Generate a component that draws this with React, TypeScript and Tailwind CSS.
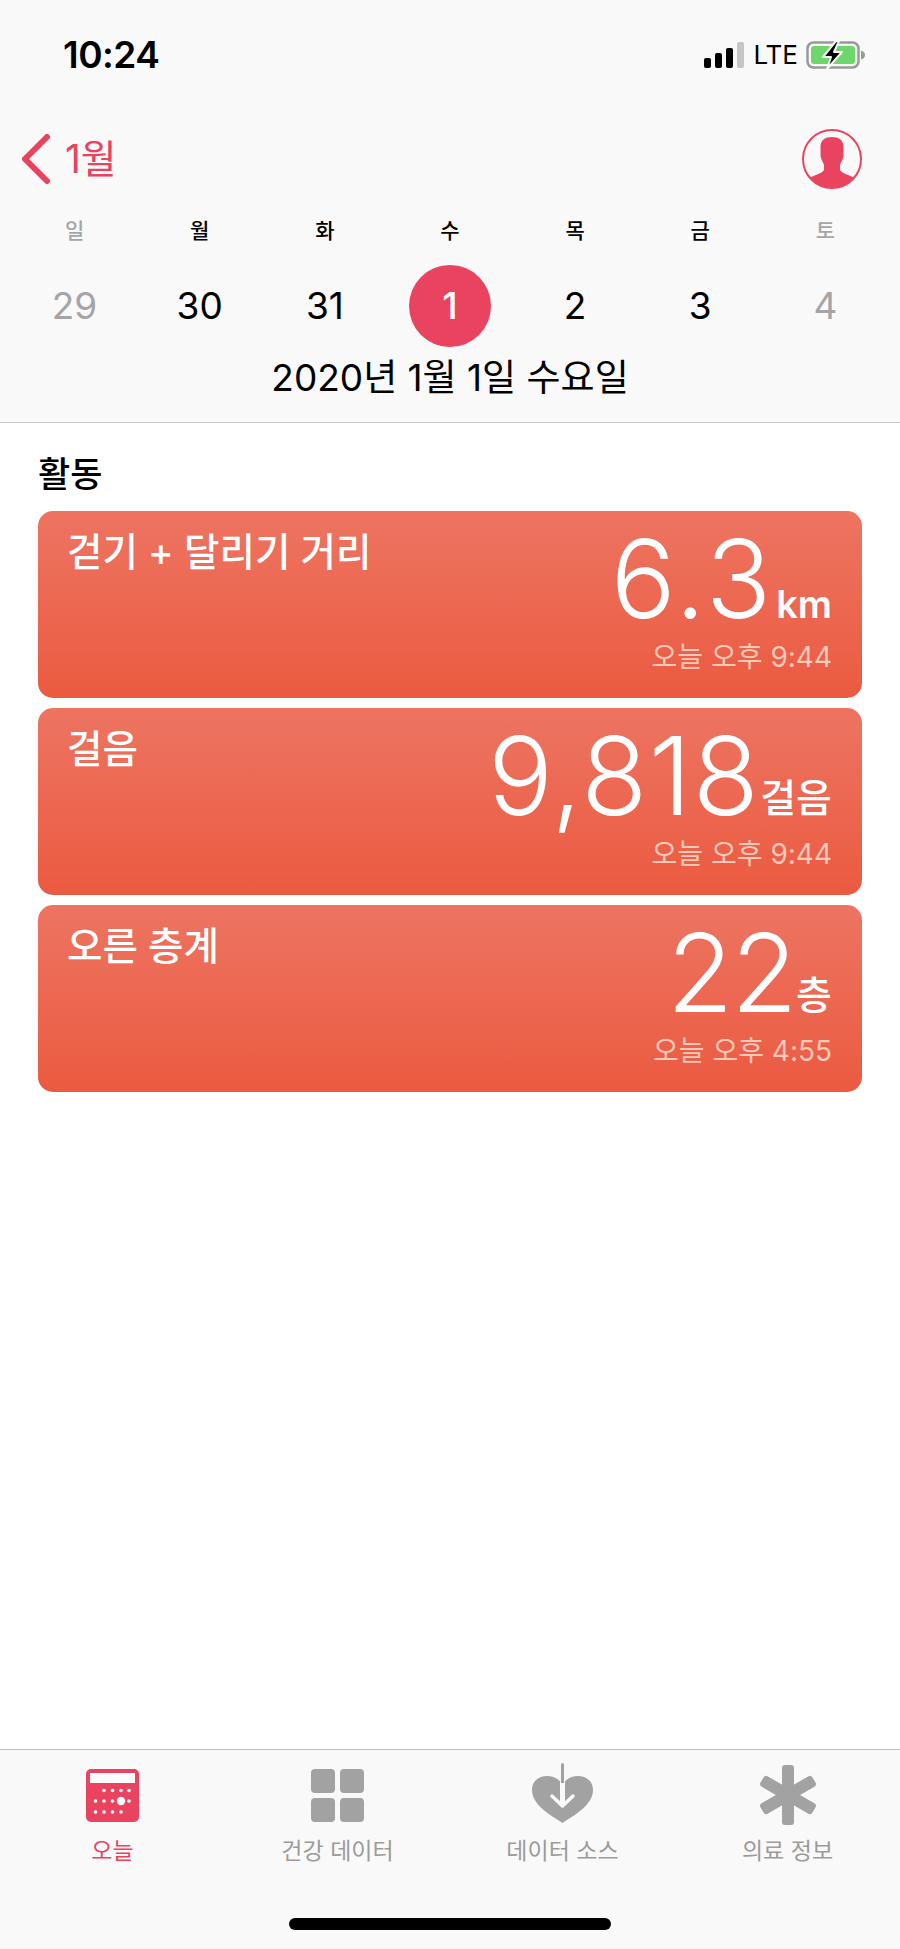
import React from "react";

const FONT = "font-['Inter','Noto_Sans_CJK_KR',sans-serif]";

function Signal() {
  return (
    <svg width="41" height="26" viewBox="0 0 41 26">
      <rect x="0" y="16" width="7" height="10" rx="2" fill="#000" />
      <rect x="11" y="11" width="7" height="15" rx="2" fill="#000" />
      <rect x="22" y="6" width="7" height="20" rx="2" fill="#000" />
      <rect x="33" y="0" width="7" height="26" rx="2" fill="#c6c6c6" />
    </svg>
  );
}

function Battery() {
  return (
    <svg width="60" height="28" viewBox="0 0 60 28">
      <rect x="1.5" y="1.5" width="51" height="25" rx="6" fill="none" stroke="#9a9a9a" strokeWidth="2.5" />
      <rect x="5" y="5" width="44" height="18" rx="3" fill="#6fd66b" />
      <path d="M55 9.5 C58 10.5 59 12 59 14 C59 16 58 17.5 55 18.5 Z" fill="#9a9a9a" />
      <path d="M30 0 L17 16 H25 L21 28 L36 11 H28 L33 0 Z" fill="#000" stroke="#f9f9f9" strokeWidth="2" strokeLinejoin="round" />
    </svg>
  );
}

function Avatar() {
  return (
    <svg width="60" height="60" viewBox="0 0 60 60">
      <defs>
        <clipPath id="avatar-clip">
          <circle cx="30" cy="30" r="29" />
        </clipPath>
      </defs>
      <circle cx="30" cy="30" r="29" fill="none" stroke="#ea4360" strokeWidth="2" />
      <path
        clipPath="url(#avatar-clip)"
        d="M30 8 C37 8 41 11 41.5 17 L41.5 25 C41.5 30 39 33 38 36 L38 41 C40 45 49 46 54 50 L54 60 H6 L6 50 C11 46 20 45 22 41 L22 36 C21 33 18.5 30 18.5 25 L18.5 17 C19 11 23 8 30 8 Z"
        fill="#ea4360"
      />
    </svg>
  );
}

function TodayIcon() {
  const dots: [number, number][] = [
    [18, 21.5], [26.5, 21.5], [35, 21.5], [43, 21.5],
    [9.5, 32], [18, 32], [26.5, 32], [43, 32],
    [9.5, 43], [18, 43], [26.5, 43], [35, 43],
  ];
  return (
    <svg width="53" height="53" viewBox="0 0 53 53">
      <rect width="53" height="53" rx="5" fill="#ea4360" />
      <rect x="4" y="4" width="45" height="10" fill="#fff" />
      {dots.map(([x, y]) => (
        <circle key={x + "-" + y} cx={x} cy={y} r="1.8" fill="#fff" />
      ))}
      <circle cx="35" cy="32" r="4.2" fill="#fff" />
    </svg>
  );
}

function GridIcon() {
  return (
    <svg width="53" height="53" viewBox="0 0 53 53" fill="#a2a2a2">
      <rect x="0" y="0" width="24" height="24" rx="4" />
      <rect x="29" y="0" width="24" height="24" rx="4" />
      <rect x="0" y="29" width="24" height="24" rx="4" />
      <rect x="29" y="29" width="24" height="24" rx="4" />
    </svg>
  );
}

function HeartIcon() {
  return (
    <svg width="61" height="60" viewBox="0 0 61 60" className="mt-[-6px]">
      <path
        d="M30.5 60 C22 54 0 43 0 27 C0 18 7 13 15 13 C22 13 27 16 30.5 22 C34 16 39 13 46 13 C54 13 61 18 61 27 C61 43 39 54 30.5 60 Z"
        fill="#a2a2a2"
      />
      <path d="M30.5 1 V41" stroke="#f9f9f9" strokeWidth="5" strokeLinecap="round" />
      <path d="M30.5 1.5 V20" stroke="#a2a2a2" strokeWidth="3" strokeLinecap="round" />
      <path d="M30.5 20 V41" stroke="#f9f9f9" strokeWidth="3" />
      <path d="M20 33 L30.5 43 L41 33" fill="none" stroke="#f9f9f9" strokeWidth="3.5" strokeLinecap="round" strokeLinejoin="round" />
    </svg>
  );
}

function AsteriskIcon() {
  return (
    <svg width="58" height="60" viewBox="0 0 58 60" fill="#a2a2a2" className="mt-[-4px]">
      <rect x="23" y="0" width="12" height="60" rx="3" />
      <rect x="23" y="0" width="12" height="60" rx="3" transform="rotate(60 29 30)" />
      <rect x="23" y="0" width="12" height="60" rx="3" transform="rotate(-60 29 30)" />
    </svg>
  );
}

function Card({ title, value, unit, unitClass, valueClass, time }: { title: string; value: string; unit: string; unitClass: string; valueClass: string; time: string }) {
  return (
    <div className="h-[187px] rounded-[15px] bg-gradient-to-b from-[#ed7461] to-[#eb5a40] pl-[29px] pr-[30px] flex justify-between text-white">
      <div className="pt-[17px] text-[38.5px] leading-[48px] font-medium">{title}</div>
      <div className="flex flex-col items-end">
        <div className="flex items-baseline mt-[10px] h-[116px]">
          <span className={"text-[108px] leading-[116px] font-[270] " + valueClass}>{value}</span>
          <span className={"leading-[44px] " + unitClass}>{unit}</span>
        </div>
        <div className="text-[28px] leading-[36px] text-[#fac9b8] mt-[2px]">{time}</div>
      </div>
    </div>
  );
}

function Tab({ icon, label, active }: { icon: React.ReactNode; label: string; active?: boolean }) {
  return (
    <div className="flex flex-col items-center">
      <div className="h-[53px] flex items-start justify-center">{icon}</div>
      <div className={"mt-[14px] text-[23px] leading-[30px] " + (active ? "text-[#ea4360]" : "text-[#9b9b9b]")}>{label}</div>
    </div>
  );
}

export default function App() {
  const week = [
    { d: "일", n: "29", muted: true },
    { d: "월", n: "30" },
    { d: "화", n: "31" },
    { d: "수", n: "1", today: true },
    { d: "목", n: "2" },
    { d: "금", n: "3" },
    { d: "토", n: "4", muted: true },
  ];
  return (
    <div className={FONT + " w-[900px] h-[1949px] bg-white flex flex-col text-black overflow-hidden"}>
      <header className="h-[423px] bg-[#f9f9f9] border-b border-[#c8c8c8] shrink-0">
        <div className="h-[110px] pl-[63px] pr-[34px] flex items-center justify-between">
          <span className="text-[37px] font-semibold tracking-[-0.5px]">10:24</span>
          <div className="flex items-center">
            <Signal />
            <span className="ml-[8px] text-[26px] leading-none font-normal">LTE</span>
            <span className="ml-[8px] flex"><Battery /></span>
          </div>
        </div>
        <div className="h-[78px] pl-[21px] pr-[38px] flex items-center justify-between mt-[10px]">
          <div className="flex items-center">
            <svg width="30" height="50" viewBox="0 0 30 50">
              <path d="M26 3 L4 25 L26 47" fill="none" stroke="#ea4360" strokeWidth="6" strokeLinecap="round" strokeLinejoin="round" />
            </svg>
            <span className="ml-[14px] text-[39px] text-[#ea4360]">1월</span>
          </div>
          <Avatar />
        </div>
        <div className="grid grid-cols-7 px-[12px] mt-[19px]">
          {week.map((w) => (
            <div key={w.d} className={"text-center text-[21px] leading-[28px] font-medium " + (w.muted ? "text-[#a5a5a5]" : "text-black")}>
              {w.d}
            </div>
          ))}
        </div>
        <div className="grid grid-cols-7 px-[12px] mt-[20px]">
          {week.map((w) => (
            <div key={w.n} className="flex justify-center">
              <div
                className={
                  "w-[82px] h-[82px] rounded-full flex items-center justify-center text-[37px] " +
                  (w.today ? "bg-[#ea4360] text-white font-medium" : w.muted ? "text-[#a5a5a5]" : "text-black")
                }
              >
                {w.n}
              </div>
            </div>
          ))}
        </div>
        <div className="text-center text-[37px] leading-[48px] mt-[7px]">2020년 1월 1일 수요일</div>
      </header>
      <main className="flex-1 px-[38px]">
        <h2 className="text-[35px] leading-[48px] font-medium mt-[27px] mb-[13px]">활동</h2>
        <div className="flex flex-col gap-[10px]">
          <Card title="걷기 + 달리기 거리" value="6.3" valueClass="tracking-[3px]" unit="km" unitClass="ml-[2px] text-[38px] font-semibold" time="오늘 오후 9:44" />
          <Card title="걸음" value="9,818" valueClass="tracking-[1.5px]" unit="걸음" unitClass="text-[39px] font-medium -translate-y-[3px]" time="오늘 오후 9:44" />
          <Card title="오른 층계" value="22" valueClass="tracking-[-2px]" unit="층" unitClass="ml-[0.5px] text-[39px] font-medium -translate-y-[3px]" time="오늘 오후 4:55" />
        </div>
      </main>
      <nav className="h-[200px] bg-[#f9f9f9] border-t border-[#c0c0c0] shrink-0 flex flex-col">
        <div className="grid grid-cols-4 pt-[19px]">
          <Tab icon={<TodayIcon />} label="오늘" active />
          <Tab icon={<GridIcon />} label="건강 데이터" />
          <Tab icon={<HeartIcon />} label="데이터 소스" />
          <Tab icon={<AsteriskIcon />} label="의료 정보" />
        </div>
        <div className="mt-[52px] mx-auto w-[322px] h-[12px] rounded-full bg-black" />
      </nav>
    </div>
  );
}
